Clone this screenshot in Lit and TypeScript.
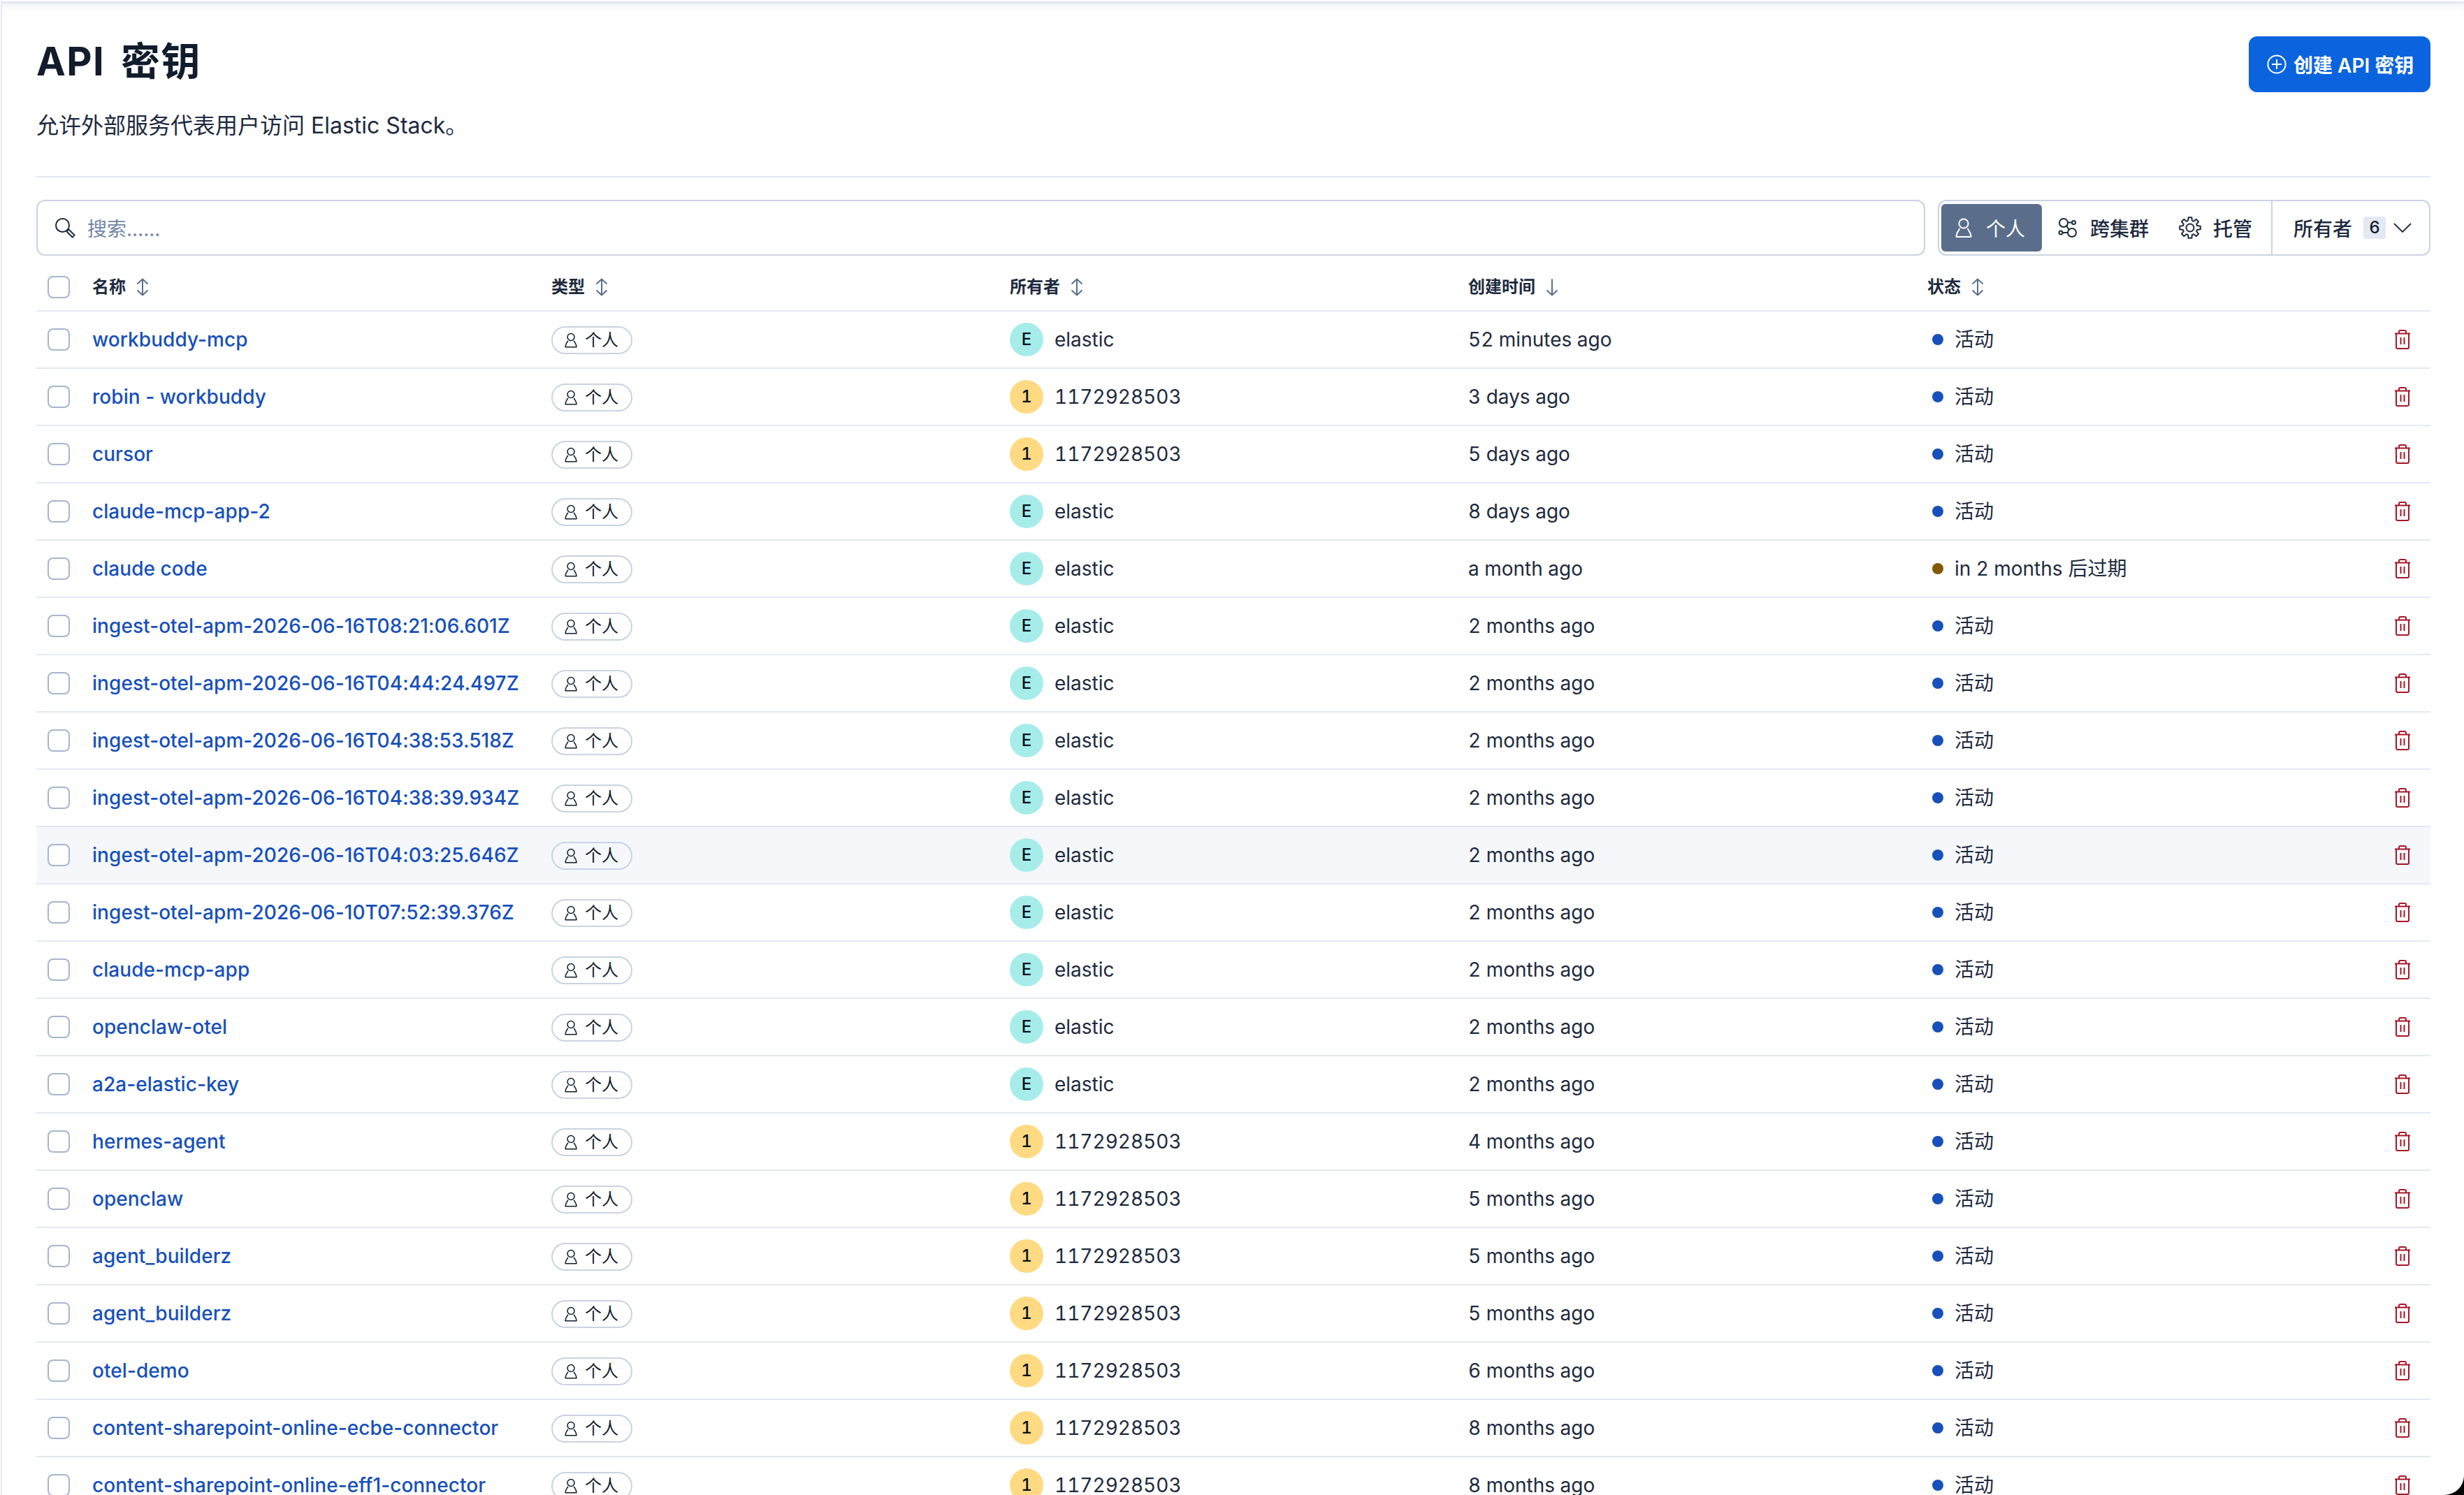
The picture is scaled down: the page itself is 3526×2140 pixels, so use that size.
import { LitElement, html, css, svg } from "lit";
import { customElement } from "lit/decorators.js";

type Row = { name: string; owner: string; created: string; status?: string };

const E = "elastic";
const N = "1172928503";
const rows: Row[] = [
  { name: "workbuddy-mcp", owner: E, created: "52 minutes ago" },
  { name: "robin - workbuddy", owner: N, created: "3 days ago" },
  { name: "cursor", owner: N, created: "5 days ago" },
  { name: "claude-mcp-app-2", owner: E, created: "8 days ago" },
  { name: "claude code", owner: E, created: "a month ago", status: "in 2 months 后过期" },
  { name: "ingest-otel-apm-2026-06-16T08:21:06.601Z", owner: E, created: "2 months ago" },
  { name: "ingest-otel-apm-2026-06-16T04:44:24.497Z", owner: E, created: "2 months ago" },
  { name: "ingest-otel-apm-2026-06-16T04:38:53.518Z", owner: E, created: "2 months ago" },
  { name: "ingest-otel-apm-2026-06-16T04:38:39.934Z", owner: E, created: "2 months ago" },
  { name: "ingest-otel-apm-2026-06-16T04:03:25.646Z", owner: E, created: "2 months ago" },
  { name: "ingest-otel-apm-2026-06-10T07:52:39.376Z", owner: E, created: "2 months ago" },
  { name: "claude-mcp-app", owner: E, created: "2 months ago" },
  { name: "openclaw-otel", owner: E, created: "2 months ago" },
  { name: "a2a-elastic-key", owner: E, created: "2 months ago" },
  { name: "hermes-agent", owner: N, created: "4 months ago" },
  { name: "openclaw", owner: N, created: "5 months ago" },
  { name: "agent_builderz", owner: N, created: "5 months ago" },
  { name: "agent_builderz", owner: N, created: "5 months ago" },
  { name: "otel-demo", owner: N, created: "6 months ago" },
  { name: "content-sharepoint-online-ecbe-connector", owner: N, created: "8 months ago" },
  { name: "content-sharepoint-online-eff1-connector", owner: N, created: "8 months ago" },
];

function gearPath(cx: number, cy: number, ro: number, ri: number, teeth: number) {
  const pts: string[] = [];
  const step = (Math.PI * 2) / teeth;
  for (let i = 0; i < teeth; i++) {
    const a = i * step - Math.PI / 2;
    const p = (r: number, d: number) =>
      `${(cx + r * Math.cos(a + d * step)).toFixed(2)} ${(cy + r * Math.sin(a + d * step)).toFixed(2)}`;
    pts.push(`${i === 0 ? "M" : "L"}${p(ri, -0.36)}`, `L${p(ro, -0.2)}`, `L${p(ro, 0.2)}`, `L${p(ri, 0.36)}`);
  }
  return pts.join(" ") + " Z";
}

const icon = {
  user: () => svg`<svg viewBox="0 0 24 28" fill="none" stroke="currentColor" stroke-width="2" stroke-linejoin="round">
    <circle cx="12" cy="8" r="6.6"/><path d="M6.5 15 L2.6 21.5 L1.4 26.4 a.6.6 0 0 0 .6.6 H22 a.6.6 0 0 0 .6-.6 L21.4 21.5 L17.5 15"/></svg>`,
  sort: () => svg`<svg class="sort" viewBox="0 0 18 26" fill="none" stroke="currentColor" stroke-width="2">
    <path d="M9 1.5V24.5M1.5 8.5L9 1.5L16.5 8.5M1.5 17.5L9 24.5L16.5 17.5"/></svg>`,
  down: () => svg`<svg class="sort" viewBox="0 0 18 26" fill="none" stroke="currentColor" stroke-width="2">
    <path d="M9 1.5V24.5M1.5 17.5L9 24.5L16.5 17.5"/></svg>`,
};

@customElement("app-root")
export class AppRoot extends LitElement {
  static styles = css`
    :host {
      display: block;
      width: 100%;
      height: 2140px;
      overflow: hidden;
      background: #000;
      font-family: Inter, "Noto Sans CJK SC", sans-serif;
      color: #1d2a3e;
    }
    * { box-sizing: border-box; }
    .page {
      height: 2140px;
      overflow: hidden;
      background: #fff;
      border-bottom-right-radius: 28px;
      padding: 52px 48px 0 52px;
      position: relative;
    }
    .frame {
      position: absolute;
      inset: 2px 0 0 1px;
      border-top: 3px solid #e3e8f2;
      border-left: 2px solid #e3e8f2;
      box-shadow: inset 0 10px 12px -8px rgba(60, 80, 120, 0.1);
      pointer-events: none;
    }
    .head {
      display: flex;
      justify-content: space-between;
      align-items: flex-start;
      height: 202px;
      border-bottom: 2px solid #e3e8f2;
    }
    h1 {
      margin: 2px 0 0;
      font-size: 56px;
      line-height: 68px;
      letter-spacing: 1.5px;
      word-spacing: 8px;
      font-weight: 700;
      color: #111c2c;
    }
    .sub {
      margin: 34px 0 0;
      font-size: 32px;
      line-height: 48px;
      color: #1d2a3e;
    }
    .create {
      width: 260px;
      height: 80px;
      display: flex;
      align-items: center;
      gap: 10px;
      padding-left: 26px;
      background: #0b64dd;
      color: #fff;
      border-radius: 12px;
      font-size: 28px;
      font-weight: 600;
      white-space: nowrap;
    }
    .create svg { width: 28px; height: 28px; flex: none; }
    .tools {
      display: flex;
      gap: 18px;
      margin-top: 32px;
      height: 80px;
    }
    .search {
      flex: 1;
      border: 2px solid #cad3e2;
      border-radius: 12px;
      display: flex;
      align-items: center;
      padding-left: 24px;
      gap: 17px;
      font-size: 28px;
      color: #7186a8;
    }
    .search svg { width: 30px; height: 30px; color: #1d2a3e; }
    .filters {
      width: 705px;
      flex: none;
      border: 2px solid #cad3e2;
      border-radius: 12px;
      display: flex;
      align-items: stretch;
      padding-left: 3px;
      font-size: 28px;
      font-weight: 500;
    }
    .tab {
      display: flex;
      align-items: center;
      white-space: nowrap;
    }
    .t1 {
      width: 144px;
      margin: 4px 0;
      padding-left: 20px;
      gap: 20px;
      background: #5a6e8c;
      color: #fff;
      border-radius: 6px;
      font-weight: 400;
    }
    .t2 { width: 176px; padding-left: 23px; gap: 18px; }
    .t3 { width: 152px; padding-left: 20px; gap: 17px; }
    .t1 svg { width: 24px; height: 28px; }
    .t2 svg { width: 28px; height: 28px; }
    .t3 svg { width: 32px; height: 32px; }
    .owner {
      flex: 1;
      display: flex;
      align-items: center;
      border-left: 2px solid #cad3e2;
      padding-left: 30px;
      white-space: nowrap;
    }
    .count {
      width: 32px;
      height: 32px;
      margin-left: 16px;
      margin-right: 11px;
      background: #e3e8f2;
      border-radius: 4px;
      color: #111c2c;
      font-size: 24px;
      line-height: 32px;
      text-align: center;
    }
    .owner svg { width: 26px; height: 14px; }
    .row {
      display: grid;
      grid-template-columns: 80px 657px 656px 656px 657px 1fr;
      align-items: center;
      height: 82px;
      border-bottom: 2px solid #e3e8f2;
      font-size: 28px;
      line-height: 40px;
    }
    .row.th {
      height: 80px;
      padding-top: 12px;
      font-size: 24px;
      font-weight: 600;
      color: #1d2a3e;
    }
    .row.hover { background: #f5f7fb; }
    .th > div {
      display: flex;
      align-items: center;
      gap: 15px;
    }
    .sort { width: 18px; height: 26px; color: #5a6e8c; flex: none; }
    .check {
      width: 32px;
      height: 32px;
      margin-left: 16px;
      border: 2.5px solid #a6b5cf;
      border-radius: 8px;
      background: #fff;
    }
    .link { color: #1750ba; font-weight: 500; white-space: nowrap; letter-spacing: 0.06px; }
    .pill {
      width: 116px;
      height: 40px;
      margin-top: 2px;
      border: 2px solid #cad3e2;
      border-radius: 20px;
      display: flex;
      align-items: center;
      padding-left: 17px;
      gap: 11px;
      font-size: 24px;
      color: #111c2c;
    }
    .pill svg { width: 18px; height: 22px; flex: none; }
    .ownerCell { display: flex; align-items: center; gap: 16px; font-variant-numeric: tabular-nums; }
    .created { font-variant-numeric: tabular-nums; }
    .avatar {
      width: 48px;
      height: 48px;
      border-radius: 50%;
      display: flex;
      align-items: center;
      justify-content: center;
      color: #07101f;
      font-size: 24px;
      font-weight: 500;
      flex: none;
    }
    .a-e { background: #a6edea; }
    .a-n { background: #ffda82; }
    .last { display: flex; align-items: center; justify-content: space-between; padding: 0 28px 0 7px; }
    .status { display: flex; align-items: center; gap: 16px; white-space: nowrap; }
    .dot { width: 16px; height: 16px; border-radius: 50%; background: #1750ba; flex: none; }
    .dot.warn { background: #825803; }
    .trash { width: 24px; height: 28px; color: #a71627; flex: none; }
  `;

  private renderRow(r: Row, i: number) {
    const isE = r.owner === E;
    return html`<div class="row ${i === 9 ? "hover" : ""}">
      <div><div class="check"></div></div>
      <div class="link">${r.name}</div>
      <div><div class="pill">${icon.user()}<span>个人</span></div></div>
      <div class="ownerCell">
        <div class="avatar ${isE ? "a-e" : "a-n"}">${isE ? "E" : "1"}</div>
        <span>${r.owner}</span>
      </div>
      <div class="created">${r.created}</div>
      <div class="last">
        <div class="status"><span class="dot ${r.status ? "warn" : ""}"></span><span>${r.status ?? "活动"}</span></div>
        <svg class="trash" viewBox="0 0 24 28" fill="none" stroke="currentColor" stroke-width="2" stroke-linecap="round">
          <path d="M1 5.5H23" stroke-linecap="butt"/>
          <path d="M7 5V3a2 2 0 0 1 2-2h6a2 2 0 0 1 2 2v2"/>
          <path d="M3 5.5V25a2 2 0 0 0 2 2h14a2 2 0 0 0 2-2V5.5"/>
          <path d="M9.5 11V21M14.5 11V21" stroke-linecap="butt"/>
        </svg>
      </div>
    </div>`;
  }

  render() {
    return html`<div class="page">
      <div class="frame"></div>
      <div class="head">
        <div>
          <h1>API 密钥</h1>
          <p class="sub">允许外部服务代表用户访问 Elastic Stack。</p>
        </div>
        <div class="create">
          <svg viewBox="0 0 28 28" fill="none" stroke="currentColor" stroke-width="2">
            <circle cx="14" cy="14" r="12.6"/><path d="M14 7V21M7 14H21"/>
          </svg>
          <span>创建 API 密钥</span>
        </div>
      </div>
      <div class="tools">
        <div class="search">
          <svg viewBox="0 0 30 30" fill="none" stroke="currentColor" stroke-width="2" stroke-linejoin="round">
            <circle cx="11.5" cy="11.5" r="9.5"/><path d="M18.5 18.5L21 18L28.6 25.6L25.6 28.6L18 21Z"/>
          </svg>
          <span>搜索......</span>
        </div>
        <div class="filters">
          <div class="tab t1">${icon.user()}<span>个人</span></div>
          <div class="tab t2">
            <svg viewBox="0 0 28 28" fill="none" stroke="currentColor" stroke-width="2">
              <circle cx="8" cy="7" r="6"/><circle cx="22.5" cy="6.5" r="2.5"/><circle cx="4" cy="21" r="2.5"/><circle cx="20" cy="21" r="6"/>
              <path d="M14 6.5H20M6.5 21H14M12.5 11.5L15.5 16.5"/>
            </svg>
            <span>跨集群</span>
          </div>
          <div class="tab t3">
            <svg viewBox="0 0 32 32" fill="none" stroke="currentColor" stroke-width="2" stroke-linejoin="round">
              <path d=${gearPath(16, 16, 15, 10.5, 8)}/><circle cx="16" cy="16" r="5.5"/>
            </svg>
            <span>托管</span>
          </div>
          <div class="owner">
            <span>所有者</span><span class="count">6</span>
            <svg viewBox="0 0 26 14" fill="none" stroke="currentColor" stroke-width="1.8"><path d="M1 1L13 13L25 1"/></svg>
          </div>
        </div>
      </div>
      <div class="row th">
        <div><div class="check"></div></div>
        <div><span>名称</span>${icon.sort()}</div>
        <div><span>类型</span>${icon.sort()}</div>
        <div><span>所有者</span>${icon.sort()}</div>
        <div><span>创建时间</span>${icon.down()}</div>
        <div><span>状态</span>${icon.sort()}</div>
      </div>
      ${rows.map((r, i) => this.renderRow(r, i))}
    </div>`;
  }
}
